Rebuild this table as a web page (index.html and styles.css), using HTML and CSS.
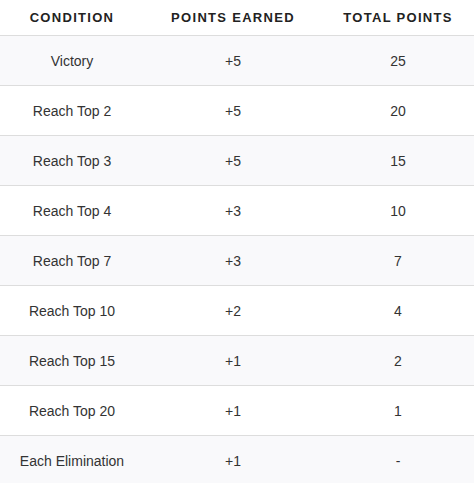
FILE: index.html
```html
<!DOCTYPE html>
<html>
<head>
<meta charset="utf-8">
<link rel="stylesheet" href="styles.css">
</head>
<body>
<table class="points">
  <colgroup>
    <col class="c1"><col class="c2"><col class="c3">
  </colgroup>
  <thead>
    <tr><th>Condition</th><th>Points Earned</th><th>Total Points</th></tr>
  </thead>
  <tbody>
    <tr><td>Victory</td><td>+5</td><td>25</td></tr>
    <tr><td>Reach Top 2</td><td>+5</td><td>20</td></tr>
    <tr><td>Reach Top 3</td><td>+5</td><td>15</td></tr>
    <tr><td>Reach Top 4</td><td>+3</td><td>10</td></tr>
    <tr><td>Reach Top 7</td><td>+3</td><td>7</td></tr>
    <tr><td>Reach Top 10</td><td>+2</td><td>4</td></tr>
    <tr><td>Reach Top 15</td><td>+1</td><td>2</td></tr>
    <tr><td>Reach Top 20</td><td>+1</td><td>1</td></tr>
    <tr><td>Each Elimination</td><td>+1</td><td>-</td></tr>
  </tbody>
</table>
</body>
</html>
```
FILE: styles.css
```css
html, body {
  margin: 0;
  padding: 0;
  background: #fff;
}
body {
  font-family: "Liberation Sans", Arial, sans-serif;
}
.points {
  width: 474px;
  border-collapse: collapse;
  table-layout: fixed;
}
.c1 { width: 144px; }
.c2 { width: 178px; }
.c3 { width: 152px; }
.points th {
  height: 34px;
  padding: 0 0 1px;
  font-size: 13px;
  font-weight: bold;
  text-transform: uppercase;
  letter-spacing: 1.3px;
  color: #222;
  text-align: center;
  vertical-align: middle;
  border-bottom: 1px solid #ddd;
}
.points td {
  height: 49px;
  padding: 0;
  font-size: 14px;
  color: #333;
  text-align: center;
  vertical-align: middle;
  border-bottom: 1px solid #ddd;
}
.points tbody tr:nth-child(odd) td {
  background: #f9f9fb;
}
```
